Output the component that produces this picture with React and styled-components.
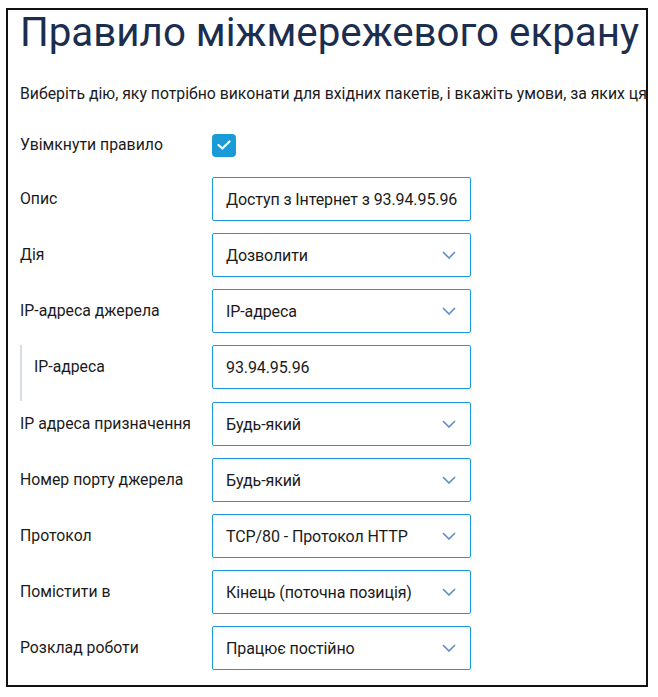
import React from 'react';
import styled, { createGlobalStyle } from 'styled-components';

const GlobalStyle = createGlobalStyle`
  html, body {
    margin: 0;
    padding: 0;
    background: #ffffff;
  }
  body {
    font-family: Roboto, "Noto Sans", sans-serif;
    color: #1b1b1b;
  }
`;

const Frame = styled.div`
  box-sizing: border-box;
  margin: 8px 0 0 6px;
  width: 642px;
  height: 679px;
  border: 2px solid #111111;
  overflow: hidden;
  padding: 0 0 0 12px;
`;

const Title = styled.h1`
  margin: 0;
  font-size: 40.3px;
  font-weight: 400;
  line-height: 46px;
  color: #1c2e4f;
  white-space: nowrap;
`;

const Intro = styled.p`
  margin: 28px 0 0;
  font-size: 15.8px;
  line-height: 20px;
  white-space: nowrap;
  color: #1b1b1b;
`;

const Form = styled.div`
  display: flex;
  flex-direction: column;
  gap: 12px;
  margin-top: 29px;
`;

const Row = styled.div`
  display: grid;
  grid-template-columns: 192px 259px;
  align-items: center;
  min-height: ${(p) => (p.$short ? '24px' : '44px')};
  margin-bottom: ${(p) => (p.$short ? '8px' : p.$nested ? '1px' : '0')};
`;

const Label = styled.div`
  font-size: 15.8px;
  line-height: 20px;
  color: #1b1b1b;
  ${(p) =>
    p.$nested &&
    `
    align-self: stretch;
    display: flex;
    align-items: center;
    margin-bottom: -12px;
    padding: 0 0 12px 12px;
    border-left: 2px solid #d9dde7;
  `}
`;

const Box = styled.div`
  box-sizing: border-box;
  height: 44px;
  border: 1px solid #1a9ad6;
  border-radius: 2px;
  display: flex;
  align-items: center;
  justify-content: space-between;
  padding: 0 14px 0 13px;
  font-size: 16px;
  letter-spacing: -0.1px;
  color: #1b1b1b;
  white-space: nowrap;
`;

const Check = styled.div`
  width: 24px;
  height: 23px;
  border-radius: 4px;
  background: #1a9ad6;
  display: flex;
  align-items: center;
  justify-content: center;
`;

const Chevron = () => (
  <svg width="14" height="8" viewBox="0 0 14 8" fill="none">
    <path d="M1 1l6 6 6-6" stroke="#5b8dc9" strokeWidth="1.6" />
  </svg>
);

const fields = [
  { label: 'Опис', value: 'Доступ з Інтернет з 93.94.95.96', select: false },
  { label: 'Дія', value: 'Дозволити', select: true },
  { label: 'IP-адреса джерела', value: 'IP-адреса', select: true },
  { label: 'IP-адреса', value: '93.94.95.96', select: false, nested: true },
  { label: 'IP адреса призначення', value: 'Будь-який', select: true },
  { label: 'Номер порту джерела', value: 'Будь-який', select: true },
  { label: 'Протокол', value: 'TCP/80 - Протокол HTTP', select: true },
  { label: 'Помістити в', value: 'Кінець (поточна позиція)', select: true },
  { label: 'Розклад роботи', value: 'Працює постійно', select: true },
];

export default function App() {
  return (
    <>
      <GlobalStyle />
      <Frame>
        <Title>Правило міжмережевого екрану</Title>
        <Intro>
          Виберіть дію, яку потрібно виконати для вхідних пакетів, і вкажіть умови, за яких ця дія буде виконуватися.
        </Intro>
        <Form>
          <Row $short>
            <Label>Увімкнути правило</Label>
            <Check>
              <svg width="14" height="10" viewBox="0 0 14 10" fill="none">
                <path d="M1.5 5l3.8 3.5L12.5 1.5" stroke="#ffffff" strokeWidth="2.2" strokeLinecap="round" strokeLinejoin="round" />
              </svg>
            </Check>
          </Row>
          {fields.map((f) => (
            <Row key={f.label + f.value} $nested={f.nested}>
              <Label $nested={f.nested}>{f.label}</Label>
              <Box>
                <span>{f.value}</span>
                {f.select && <Chevron />}
              </Box>
            </Row>
          ))}
        </Form>
      </Frame>
    </>
  );
}
